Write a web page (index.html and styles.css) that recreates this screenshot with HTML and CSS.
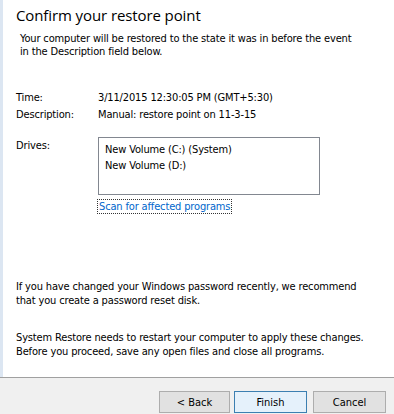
FILE: index.html
```html
<!DOCTYPE html>
<html lang="en">
  <head>
    <meta charset="UTF-8" />
    <title>System Restore</title>
    <link rel="stylesheet" href="styles.css">
  </head>
  <body>
    <div class="wizard">
      <div class="wizard-body">
        <h1 class="wizard-title">Confirm your restore point</h1>
        <p class="wizard-intro">Your computer will be restored to the state it was in before the event<br>in the Description field below.</p>

        <div class="field-list">
          <div class="field">
            <div class="field-label">Time:</div>
            <div class="field-value">3/11/2015 12:30:05 PM (GMT+5:30)</div>
          </div>
          <div class="field">
            <div class="field-label">Description:</div>
            <div class="field-value">Manual: restore point on 11-3-15</div>
          </div>
        </div>

        <div class="drives">
          <div class="field-label">Drives:</div>
          <div class="drives-col">
            <div class="drives-box">
              <div class="drive">New Volume (C:) (System)</div>
              <div class="drive">New Volume (D:)</div>
            </div>
            <a class="scan-link" href="#">Scan for affected programs</a>
          </div>
        </div>

        <p class="note note-password">If you have changed your Windows password recently, we recommend<br>that you create a password reset disk.</p>
        <p class="note">System Restore needs to restart your computer to apply these changes.<br>Before you proceed, save any open files and close all programs.</p>
      </div>
      <div class="wizard-footer">
        <button class="btn btn-back">&lt; Back</button>
        <button class="btn btn-default">Finish</button>
        <button class="btn">Cancel</button>
      </div>
    </div>
  </body>
</html>
```

FILE: styles.css
```css
* {
  box-sizing: border-box;
  margin: 0;
  padding: 0;
}

body {
  font-family: "DejaVu Sans Condensed", "DejaVu Sans", sans-serif;
  font-size: 11px;
  line-height: 13px;
  letter-spacing: -0.15px;
  color: #000;
  background: #fff;
}

.wizard {
  width: 394px;
  height: 414px;
  display: flex;
  flex-direction: column;
  overflow: hidden;
}

.wizard-body {
  flex: 1;
  border-left: 3px solid #dce6f2;
  padding: 5px 0 0 13px;
}

.wizard-title {
  font-family: "Open Sans", sans-serif;
  font-size: 15px;
  font-weight: 400;
  line-height: 20px;
  letter-spacing: -0.1px;
  color: #000;
}

.wizard-intro {
  margin: 7px 0 0 4px;
}

.field-list {
  margin-top: 33px;
}

.field {
  display: flex;
  height: 17px;
}

.field-label {
  width: 82px;
  flex-shrink: 0;
}

.drives {
  display: flex;
  margin-top: 12px;
}

.drives .field-label {
  padding-top: 2px;
}

.drives-col {
  display: flex;
  flex-direction: column;
  align-items: flex-start;
}

.drives-box {
  width: 222px;
  height: 58px;
  border: 1px solid #828790;
  padding: 5px 0 0 6px;
}

.drive {
  height: 16px;
}

.scan-link {
  margin-top: 5px;
  color: #0066cc;
  text-decoration: none;
  outline: 1px dotted #333;
  outline-offset: 0;
  padding: 0 1px;
}

.note {
  line-height: 14px;
}

.note-password {
  margin-top: 67px;
  margin-bottom: 23px;
}

.wizard-footer {
  height: 37px;
  flex-shrink: 0;
  background: #f0f0f0;
  border-top: 1px solid #a0a0a0;
  display: flex;
  justify-content: flex-end;
  align-items: flex-start;
  gap: 6px;
  padding: 13px 8px 0 0;
}

.btn {
  width: 73px;
  height: 22px;
  font: inherit;
  background: #e1e1e1;
  border: 1px solid #adadad;
  color: #000;
}

.btn-back {
  width: 71px;
  margin-right: -2px;
}

.btn-default {
  border-color: #3c7fb1;
  background: #e5f1fb;
}
```
